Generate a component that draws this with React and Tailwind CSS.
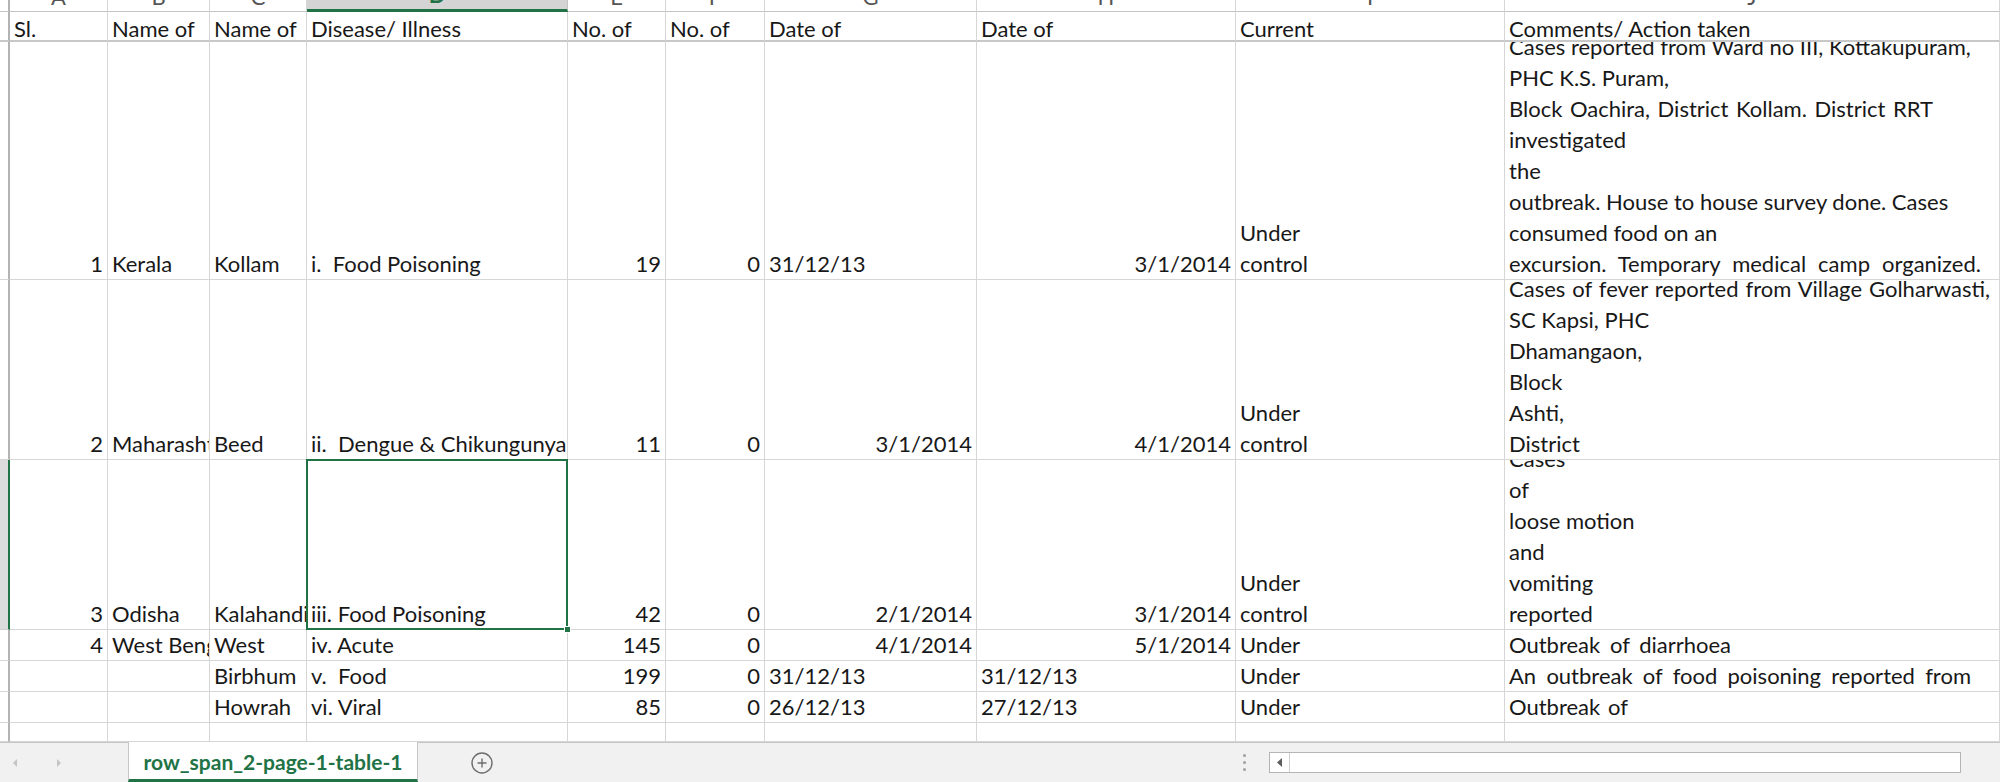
import React from 'react';
import { CirclePlus } from 'lucide-react';

const colLetters = ['A', 'B', 'C', 'D', 'E', 'F', 'G', 'H', 'I', 'J'];

const header = ['Sl.', 'Name of', 'Name of', 'Disease/ Illness', 'No. of', 'No. of', 'Date of', 'Date of', 'Current', 'Comments/ Action taken'];

// r = right aligned (numbers / real dates). w = justified line width
const rows = [
  [
    { t: '1', r: true }, { t: 'Kerala' }, { t: 'Kollam' }, { t: 'i.  Food Poisoning' },
    { t: '19', r: true }, { t: '0', r: true }, { t: '31/12/13' }, { t: '3/1/2014', r: true },
    { lines: ['Under', 'control'] },
    {
      lines: [
        { t: 'Cases reported from Ward no III, Kottakupuram,', w: 'w-[457px]' },
        'PHC K.S. Puram,',
        { t: 'Block Oachira, District Kollam. District RRT', w: 'w-[424px]' },
        'investigated',
        'the',
        { t: 'outbreak. House to house survey done. Cases', w: 'w-[437px]' },
        'consumed food on an',
        { t: 'excursion. Temporary medical camp organized.', w: 'w-[472px]' },
      ],
    },
  ],
  [
    { t: '2', r: true }, { t: 'Maharashtra' }, { t: 'Beed' }, { t: 'ii.  Dengue & Chikungunya' },
    { t: '11', r: true }, { t: '0', r: true }, { t: '3/1/2014', r: true }, { t: '4/1/2014', r: true },
    { lines: ['Under', 'control'] },
    {
      lines: [
        { t: 'Cases of fever reported from Village Golharwasti,', w: 'w-[481px]' },
        'SC Kapsi, PHC',
        'Dhamangaon,',
        'Block',
        'Ashti,',
        'District',
      ],
    },
  ],
  [
    { t: '3', r: true }, { t: 'Odisha' }, { t: 'Kalahandi' }, { t: 'iii. Food Poisoning' },
    { t: '42', r: true }, { t: '0', r: true }, { t: '2/1/2014', r: true }, { t: '3/1/2014', r: true },
    { lines: ['Under', 'control'] },
    { lines: ['Cases', 'of', 'loose motion', 'and', 'vomiting', 'reported'] },
  ],
  [
    { t: '4', r: true }, { t: 'West Bengal' }, { t: 'West' }, { t: 'iv. Acute' },
    { t: '145', r: true }, { t: '0', r: true }, { t: '4/1/2014', r: true }, { t: '5/1/2014', r: true },
    { t: 'Under' },
    { lines: [{ t: 'Outbreak of diarrhoea', w: 'w-[222px]' }] },
  ],
  [
    {}, {}, { t: 'Birbhum' }, { t: 'v.  Food' },
    { t: '199', r: true }, { t: '0', r: true }, { t: '31/12/13' }, { t: '31/12/13' },
    { t: 'Under' },
    { lines: [{ t: 'An outbreak of food poisoning reported from', w: 'w-[462px]' }] },
  ],
  [
    {}, {}, { t: 'Howrah' }, { t: 'vi. Viral' },
    { t: '85', r: true }, { t: '0', r: true }, { t: '26/12/13' }, { t: '27/12/13' },
    { t: 'Under' },
    { lines: [{ t: 'Outbreak of', w: 'w-[119px]' }] },
  ],
  [{}, {}, {}, {}, {}, {}, {}, {}, {}, {}],
];

function Cell({ cell, selected }) {
  const lines = cell.lines || (cell.t ? [cell.t] : []);
  return (
    <div
      className={`relative flex min-w-0 flex-col justify-end border-b border-r border-[#d6d6d6] px-[4px] ${
        cell.r ? 'items-end' : 'items-start'
      } ${selected ? 'z-10' : 'overflow-hidden'}`}
    >
      {lines.map((ln, i) =>
        typeof ln === 'string' ? (
          <div key={i} className="shrink-0 whitespace-pre leading-[31px]">
            {ln}
          </div>
        ) : (
          <div key={i} className={`shrink-0 whitespace-nowrap text-justify leading-[31px] [text-align-last:justify] ${ln.w}`}>
            {ln.t}
          </div>
        )
      )}
      {selected && (
        <>
          <div className="pointer-events-none absolute -left-[1px] -top-[1px] -right-[1px] -bottom-[1px] border-2 border-[#217346]" />
          <div className="absolute -bottom-[4px] -right-[4px] h-[7px] w-[7px] border border-white bg-[#217346]" />
        </>
      )}
    </div>
  );
}

function RowHead({ active }) {
  return (
    <div
      className={`border-b border-r-2 ${
        active ? 'border-b-[#cfcfcf] border-r-[#217346] bg-[#dcdcdc]' : 'border-b-[#d6d6d6] border-r-[#b3b3b3] bg-white'
      }`}
    />
  );
}

function SheetTabs() {
  return (
    <div className="flex h-[40px] items-stretch bg-[#f1f1f1]">
      <div className="flex w-[128px] items-center gap-[38px] border-t border-[#c6c6c6] pl-[12px]">
        <svg width="6" height="10" viewBox="0 0 6 10">
          <path d="M5 1 L1 5 L5 9 Z" fill="#c4c4c4" />
        </svg>
        <svg width="6" height="10" viewBox="0 0 6 10">
          <path d="M1 1 L5 5 L1 9 Z" fill="#c4c4c4" />
        </svg>
      </div>
      <div className="flex w-[290px] items-center justify-center border-x border-b-[3px] border-x-[#c6c6c6] border-b-[#217346] bg-white pt-[2px] text-[21px] font-bold text-[#217346]">
        row_span_2-page-1-table-1
      </div>
      <div className="flex flex-1 items-center border-t border-[#c6c6c6]">
        <CirclePlus className="ml-[52px]" size={24} strokeWidth={1.4} color="#6e6e6e" />
        <div className="ml-[749px] flex flex-col gap-[4px]">
          <div className="h-[3px] w-[3px] rounded-full bg-[#a0a0a0]" />
          <div className="h-[3px] w-[3px] rounded-full bg-[#a0a0a0]" />
          <div className="h-[3px] w-[3px] rounded-full bg-[#a0a0a0]" />
        </div>
        <div className="ml-[23px] flex h-[21px] w-[692px] border border-[#b5b5b5] bg-white">
          <div className="flex w-[20px] items-center justify-center border-r border-[#cfcfcf]">
            <svg width="5" height="9" viewBox="0 0 5 9">
              <path d="M5 0 L0 4.5 L5 9 Z" fill="#5e5e5e" />
            </svg>
          </div>
        </div>
      </div>
    </div>
  );
}

export default function App() {
  return (
    <div className="h-[782px] w-[2000px] overflow-hidden bg-white font-['Lato','Liberation_Sans',sans-serif] text-[22px] text-[#181818]">
      <div className="grid h-[742px] grid-cols-[10px_98px_102px_97px_261px_98px_99px_212px_259px_269px_495px] grid-rows-[12px_30px_238px_180px_170px_31px_31px_31px_19px] overflow-hidden">
        {/* column letters, mostly scrolled out of view */}
        <div className="border-b border-r-2 border-b-[#c4c4c4] border-r-[#b3b3b3] bg-white" />
        {colLetters.map((l, i) => (
          <div
            key={l}
            className={`flex items-end justify-center overflow-hidden border-r ${
              i === 3
                ? 'border-b-[3px] border-b-[#217346] border-r-[#c4c4c4] bg-[#d4d4d4] font-bold text-[#217346]'
                : 'border-b border-b-[#c4c4c4] border-r-[#d6d6d6] bg-white text-[#555]'
            }`}
          >
            <span className="mb-[4px] shrink-0 leading-[20px]">{l}</span>
          </div>
        ))}

        {/* header row */}
        <div className="border-b-2 border-r-2 border-b-[#c8c8c8] border-r-[#b3b3b3] bg-white" />
        {header.map((h, i) => (
          <div key={i} className="flex items-end overflow-hidden border-b-2 border-r border-b-[#c8c8c8] border-r-[#d6d6d6] px-[4px]">
            <div className="whitespace-nowrap leading-[23px]">{h}</div>
          </div>
        ))}

        {rows.map((row, ri) => (
          <React.Fragment key={ri}>
            <RowHead active={ri === 2} />
            {row.map((cell, ci) => (
              <Cell key={ci} cell={cell} selected={ri === 2 && ci === 3} />
            ))}
          </React.Fragment>
        ))}
      </div>
      <SheetTabs />
    </div>
  );
}
